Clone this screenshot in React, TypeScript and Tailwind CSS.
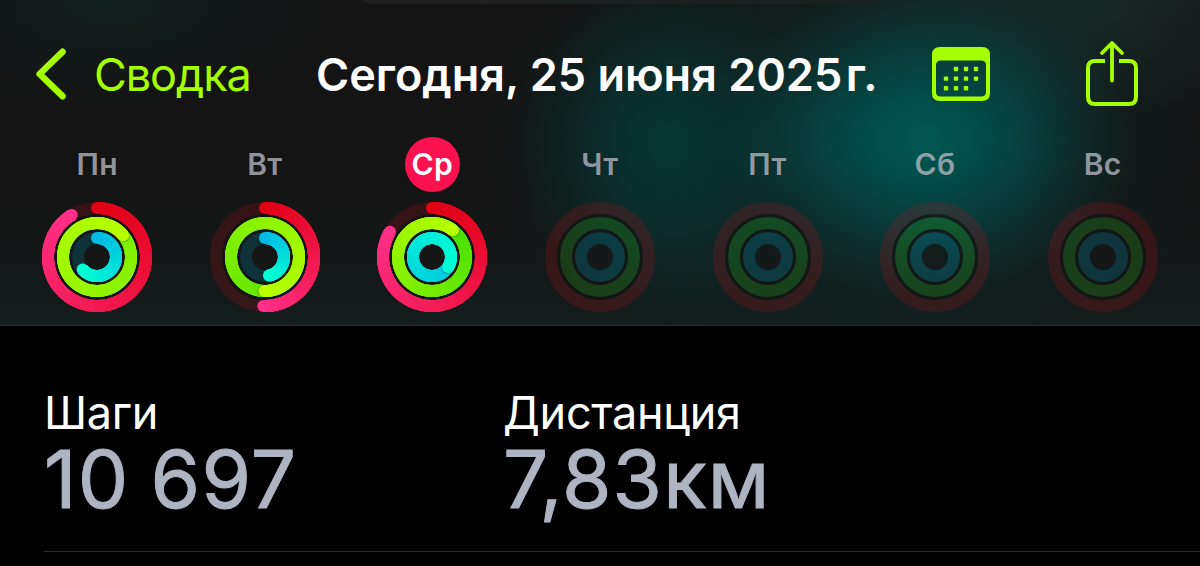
type RingProps = {
  radius: number;
  from: number[];
  to: number[];
  track: string;
  degrees: number;
};

type Day = {
  label: string;
  today?: boolean;
  move: number;
  exercise: number;
  stand: number;
};

// ring values are total degrees, over 360 means more than one lap
const DAYS: Day[] = [
  { label: "Пн", move: 329, exercise: 770, stand: 229 },
  { label: "Вт", move: 182, exercise: 541, stand: 168 },
  { label: "Ср", today: true, move: 301, exercise: 398, stand: 482 },
  { label: "Чт", move: 0, exercise: 0, stand: 0 },
  { label: "Пт", move: 0, exercise: 0, stand: 0 },
  { label: "Сб", move: 0, exercise: 0, stand: 0 },
  { label: "Вс", move: 0, exercise: 0, stand: 0 },
];

const STATS = [
  { label: "Шаги", value: "10 697" },
  { label: "Дистанция", value: "7,83км" },
];

function point(radius: number, deg: number) {
  const a = ((deg - 90) * Math.PI) / 180;
  return [radius * Math.cos(a), radius * Math.sin(a)];
}

function mix(from: number[], to: number[], t: number) {
  const c = from.map((v, i) => Math.round(v + (to[i] - v) * t));
  return `rgb(${c.join(",")})`;
}

function Ring({ radius, from, to, track, degrees }: RingProps) {
  const start = Math.max(0, degrees - 360);
  const steps = 90;
  const size = (degrees - start) / steps;
  const segments = Array.from({ length: steps }, (_, i) => {
    const a = start + i * size;
    const [x1, y1] = point(radius, a);
    const [x2, y2] = point(radius, Math.min(a + size + 8, degrees));
    return {
      d: `M${x1} ${y1}A${radius} ${radius} 0 0 1 ${x2} ${y2}`,
      color: mix(from, to, a / (degrees || 1)),
    };
  });
  const [ex, ey] = point(radius, degrees);
  const [sx, sy] = point(radius, degrees + 100 / radius);

  return (
    <g fill="none" strokeWidth="12">
      <circle r={radius} stroke={track} />
      {degrees > 0 && (
        <>
          {degrees < 360 && <circle cy={-radius} r="6" fill={mix(from, to, 0)} />}
          {segments.map((s) => (
            <path key={s.d} d={s.d} stroke={s.color} />
          ))}
          {degrees > 360 && <circle cx={sx} cy={sy} r="5.6" fill="#000" fillOpacity="0.2" />}
          <circle cx={ex} cy={ey} r="6" fill={mix(from, to, 1)} />
        </>
      )}
    </g>
  );
}

function ActivityRings({ day }: { day: Day }) {
  return (
    <svg className="size-[110px]" viewBox="-55 -55 110 110">
      <g fill="none" stroke="#121414" strokeOpacity="0.7">
        <circle r="41.5" strokeWidth="3.4" />
        <circle r="26.5" strokeWidth="3.4" />
      </g>
      <circle r="13.2" fill="#151515" fillOpacity="0.7" />
      <Ring radius={49} from={[226, 0, 20]} to={[255, 48, 136]} track="rgba(225,14,30,0.17)" degrees={day.move} />
      <Ring radius={34} from={[60, 220, 0]} to={[184, 255, 0]} track="rgba(60,235,20,0.17)" degrees={day.exercise} />
      <Ring radius={19} from={[0, 186, 228]} to={[0, 255, 212]} track="rgba(0,190,245,0.16)" degrees={day.stand} />
    </svg>
  );
}

function CalendarIcon() {
  const dots = [
    [24, 22], [34, 22], [44, 22],
    [14, 31.6], [24, 31.6], [34, 31.6], [44, 31.6],
    [14, 41.3], [24, 41.3], [34, 41.3],
  ];
  return (
    <svg className="h-[54px] w-[58px]" viewBox="0 0 58 54" fill="#a6ff00">
      <path
        fillRule="evenodd"
        d="M8 0H50Q58 0 58 8V46Q58 54 50 54H8Q0 54 0 46V8Q0 0 8 0ZM9 13.5Q4 13.5 4 18V45Q4 49.5 9 49.5H49Q54 49.5 54 45V18Q54 13.5 49 13.5Z"
      />
      {dots.map(([x, y]) => (
        <rect key={`${x}-${y}`} x={x - 2.2} y={y - 2.2} width="4.4" height="4.4" rx="1" />
      ))}
    </svg>
  );
}

function ShareIcon() {
  return (
    <svg
      className="h-[66px] w-[52px]"
      viewBox="0 0 52 66"
      fill="none"
      stroke="#a6ff00"
      strokeWidth="4"
      strokeLinejoin="round"
    >
      <path d="M19 21H9Q2 21 2 28V57Q2 64 9 64H43Q50 64 50 57V28Q50 21 43 21H33" />
      <path d="M26 40.5V3.5M16 13L26 3L36 13" strokeLinecap="round" strokeWidth="3.8" />
    </svg>
  );
}

export default function App() {
  return (
    <main className="h-[566px] w-[1200px] overflow-hidden bg-black font-['Inter',sans-serif]">
      <header className="relative h-[326px] overflow-hidden border-b border-[#2a2c2c] bg-[#141414] bg-[radial-gradient(ellipse_210px_160px_at_925px_138px,#005652_0%,#005652d8_22%,#00565288_50%,#00565234_75%,transparent_100%),radial-gradient(ellipse_150px_170px_at_665px_145px,#043c39c0_0%,#043c3990_35%,#043c3938_70%,transparent_100%),radial-gradient(ellipse_380px_220px_at_850px_145px,#083c3880_0%,#083c3848_50%,transparent_100%),radial-gradient(ellipse_220px_110px_at_110px_0px,#10242399_0%,transparent_100%),radial-gradient(ellipse_260px_120px_at_1080px_0px,#1b302dbb_0%,transparent_100%),linear-gradient(to_bottom,transparent_60%,#141c1c_100%)]">
        <div className="absolute -top-[46px] left-[350px] h-[50px] w-[540px] rounded-[40px] bg-linear-to-r from-[#202020] to-[#1a2020]" />
        <nav className="flex h-[137px] items-start text-[45px] leading-[54px]">
          <a className="flex items-start pl-9 pt-12 text-[#a6ff00]">
            <svg className="h-[52px] w-[30px]" viewBox="0 0 30 52" fill="none" stroke="#a6ff00" strokeWidth="6.5" strokeLinecap="round" strokeLinejoin="round">
              <path d="M26.5 3.8L3.6 26L26.5 48.2" />
            </svg>
            <span className="ml-7 w-[222px] whitespace-nowrap tracking-[-1.1px]">Сводка</span>
          </a>
          <h1 className="w-[616px] whitespace-nowrap pt-12 font-semibold text-white">
            Сегодня, 25 июня 2025<span className="text-[22px]">&#8239;</span>г.
          </h1>
          <div className="pt-[47px]">
            <CalendarIcon />
          </div>
          <div className="ml-24 pt-10">
            <ShareIcon />
          </div>
        </nav>
        <ul className="grid grid-cols-7 px-[13.5px]">
          {DAYS.map((day) => (
            <li key={day.label} className="flex flex-col items-center gap-[10px]">
              <span
                className={
                  day.today
                    ? "flex size-[55px] items-center justify-center rounded-full bg-[#fa114f] text-[30px] font-semibold tracking-[0.4px] text-white"
                    : "flex size-[55px] items-center justify-center text-[30px] font-semibold tracking-[0.4px] text-[#b4b7c0]/80"
                }
              >
                {day.label}
              </span>
              <ActivityRings day={day} />
            </li>
          ))}
        </ul>
      </header>

      <section className="ml-11 flex h-[226px] border-b border-[#2b2b2d] pt-[60px]">
        {STATS.map((s) => (
          <div key={s.label} className="w-[459px] whitespace-nowrap">
            <p className="text-[45px] leading-[54px] tracking-[-0.3px] text-white">{s.label}</p>
            <p className="text-[80px] leading-[78px] tracking-[1.2px] text-[#aeb4c2] [-webkit-text-stroke:1px_#aeb4c2] [word-spacing:-2.5px]">
              {s.value}
            </p>
          </div>
        ))}
      </section>
    </main>
  );
}
